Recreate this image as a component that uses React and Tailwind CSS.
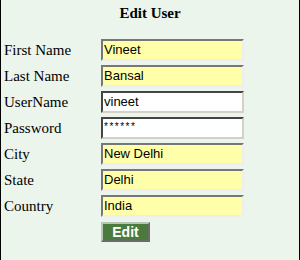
export default function App() {
  const rows = [
    { label: "First Name", value: "Vineet", yellow: true },
    { label: "Last Name", value: "Bansal", yellow: true },
    { label: "UserName", value: "vineet", yellow: false },
    { label: "Password", value: "******", yellow: false, pw: true },
    { label: "City", value: "New Delhi", yellow: true },
    { label: "State", value: "Delhi", yellow: true },
    { label: "Country", value: "India", yellow: true },
  ];
  return (
    <div className="h-[260px] w-[300px] bg-[#ebf5eb] border-x border-black font-['Liberation_Serif',serif] text-black">
      <div className="pt-[5px] text-center font-bold text-[15px] leading-[17px]">Edit User</div>
      <div className="mt-[17px] grid grid-cols-[97px_143px] gap-y-[4px] pl-[3px]">
        {rows.map((r) => (
          <div key={r.label} className="contents">
            <div className="h-[22px] flex items-center text-[15px] leading-[17px]">{r.label}</div>
            <div
              className={
                r.yellow
                  ? "h-[22px] border-2 border-t-[#777777] border-l-[#777777] border-b-[#eeeeee] border-r-[#eeeeee] bg-[#ffffaa] pl-[1px] flex items-center font-['Liberation_Sans',sans-serif] text-[13px] leading-[16px]"
                  : "h-[22px] border-2 border-t-[#444444] border-l-[#444444] border-b-[#d4d0c8] border-r-[#d4d0c8] bg-white pl-[1px] flex items-center font-['Liberation_Sans',sans-serif] text-[13px] leading-[16px]"
              }
            >
              {r.pw ? (
                <span className="text-[10px] leading-[10px] tracking-[1.5px] -mt-[2px]">{r.value}</span>
              ) : (
                r.value
              )}
            </div>
          </div>
        ))}
        <div className="mt-px"></div>
        <div className="mt-px">
          <button className="h-[20px] w-[49px] bg-[#4a7a3e] border-2 border-t-[#b8c4b4] border-l-[#b8c4b4] border-b-[#6a6a6a] border-r-[#6a6a6a] text-white font-bold font-['Liberation_Sans',sans-serif] text-[14px] leading-[16px] flex items-center justify-center">
            Edit
          </button>
        </div>
      </div>
    </div>
  );
}
